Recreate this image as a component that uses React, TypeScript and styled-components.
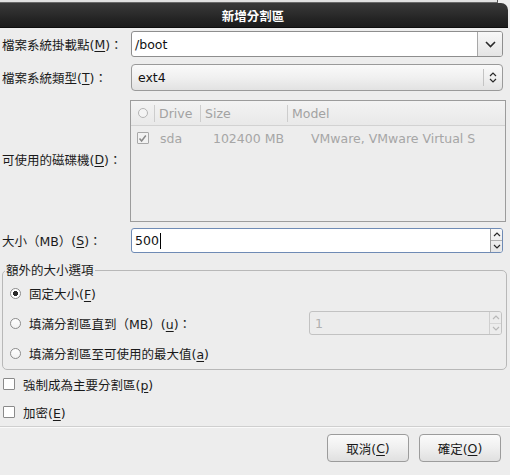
import React from "react";
import styled, { createGlobalStyle } from "styled-components";

const GlobalStyle = createGlobalStyle`
  html, body {
    margin: 0;
    padding: 0;
    background: #ededed;
  }
  body {
    font-family: "DejaVu Sans", "Noto Sans CJK TC", sans-serif;
    font-size: 12.5px;
    color: #1a1a1a;
  }
  u {
    text-underline-offset: 2px;
  }
`;

const ChevronDown = () => (
  <svg width="11" height="7" viewBox="0 0 11 7">
    <path d="M1 1 L5.5 5.5 L10 1" fill="none" stroke="#2a2a2a" strokeWidth="1.6" />
  </svg>
);

const UpDown = ({ color = "#2a2a2a" }: { color?: string }) => (
  <svg width="8" height="13" viewBox="0 0 8 13">
    <path d="M1 5 L4 2 L7 5" fill="none" stroke={color} strokeWidth="1.2" />
    <path d="M1 8 L4 11 L7 8" fill="none" stroke={color} strokeWidth="1.2" />
  </svg>
);

const ArrowUp = ({ color }: { color: string }) => (
  <svg width="8" height="5" viewBox="0 0 8 5">
    <path d="M1 4 L4 1 L7 4" fill="none" stroke={color} strokeWidth="1.2" />
  </svg>
);

const ArrowDown = ({ color }: { color: string }) => (
  <svg width="8" height="5" viewBox="0 0 8 5">
    <path d="M1 1 L4 4 L7 1" fill="none" stroke={color} strokeWidth="1.2" />
  </svg>
);

const Tick = ({ color }: { color: string }) => (
  <svg width="9" height="9" viewBox="0 0 9 9">
    <path d="M1.5 4.5 L3.6 7 L7.8 1.5" fill="none" stroke={color} strokeWidth="1.5" />
  </svg>
);

export default function App() {
  return (
    <>
      <GlobalStyle />
      <Screen>
        <TopStrip />
        <TitleBar>新增分割區</TitleBar>
        <Body>
          <FormGrid>
            <Label>
              檔案系統掛載點(<u>M</u>)：
            </Label>
            <ComboEntry>
              <EntryText>/boot</EntryText>
              <ArrowButton>
                <ChevronDown />
              </ArrowButton>
            </ComboEntry>

            <Label>
              檔案系統類型(<u>T</u>)：
            </Label>
            <ComboButton>
              <ComboText>ext4</ComboText>
              <ComboArrow>
                <UpDown />
              </ComboArrow>
            </ComboButton>

            <Label>
              可使用的磁碟機(<u>D</u>)：
            </Label>
            <Tree>
              <TreeHeader>
                <HeadCell $first>
                  <RadioMark $size={10} $dim />
                </HeadCell>
                <HeadCell>Drive</HeadCell>
                <HeadCell>Size</HeadCell>
                <HeadCell>Model</HeadCell>
              </TreeHeader>
              <TreeRow>
                <Cell $center>
                  <CheckBox $dim>
                    <Tick color="#8a8a8a" />
                  </CheckBox>
                </Cell>
                <Cell $pl={6}>sda</Cell>
                <Cell $right>102400 MB</Cell>
                <Cell $pl={24}>VMware, VMware Virtual S</Cell>
              </TreeRow>
            </Tree>

            <Label>
              大小（MB）(<u>S</u>)：
            </Label>
            <SpinEntry $focus>
              <EntryText>
                500<Caret />
              </EntryText>
              <SpinButtons>
                <SpinHalf>
                  <ArrowUp color="#2a2a2a" />
                </SpinHalf>
                <SpinHalf $bottom>
                  <ArrowDown color="#2a2a2a" />
                </SpinHalf>
              </SpinButtons>
            </SpinEntry>
          </FormGrid>

          <Frame>
            <Legend>額外的大小選項</Legend>
            <OptionRow>
              <RadioMark $size={11} $checked />
              <span>
                固定大小(<u>F</u>)
              </span>
            </OptionRow>
            <OptionRow>
              <RadioMark $size={11} />
              <span>
                填滿分割區直到（MB）(<u>u</u>)：
              </span>
              <SmallSpin>
                <DimText>1</DimText>
                <SpinButtons $dim>
                  <SpinHalf $dim>
                    <ArrowUp color="#b8b8b8" />
                  </SpinHalf>
                  <SpinHalf $bottom $dim>
                    <ArrowDown color="#b8b8b8" />
                  </SpinHalf>
                </SpinButtons>
              </SmallSpin>
            </OptionRow>
            <OptionRow>
              <RadioMark $size={11} />
              <span>
                填滿分割區至可使用的最大值(<u>a</u>)
              </span>
            </OptionRow>
          </Frame>

          <CheckRow>
            <CheckBox />
            <span>
              強制成為主要分割區(<u>p</u>)
            </span>
          </CheckRow>
          <CheckRow>
            <CheckBox />
            <span>
              加密(<u>E</u>)
            </span>
          </CheckRow>

          <Separator />

          <ButtonBar>
            <PushButton>
              取消(<u>C</u>)
            </PushButton>
            <PushButton>
              確定(<u>O</u>)
            </PushButton>
          </ButtonBar>
        </Body>
      </Screen>
    </>
  );
}

const Screen = styled.div`
  width: 510px;
  height: 475px;
  overflow: hidden;
  background: #ededed;
  display: flex;
  flex-direction: column;
`;

const TopStrip = styled.div`
  height: 3px;
  background: #e2e2e2;
  border-bottom: 1px solid #6a6a6a;
  box-sizing: border-box;
  width: 498px;
  border-right: 1px solid #555;
`;

const TitleBar = styled.div`
  height: 25px;
  margin-right: 2px;
  border-top-right-radius: 7px;
  background: linear-gradient(#3a3a3a, #232323 70%, #1c1c1c);
  border-bottom: 1px solid #0e0e0e;
  box-sizing: border-box;
  color: #ffffff;
  font-weight: bold;
  font-size: 12.5px;
  display: flex;
  align-items: center;
  justify-content: center;
  padding-right: 2px;
`;

const Body = styled.div`
  display: flex;
  flex-direction: column;
  padding-top: 3px;
`;

const FormGrid = styled.div`
  display: grid;
  grid-template-columns: 131px 1fr;
  grid-template-rows: 26px 27px 123px 25px;
  row-gap: 7px;
  padding-right: 7px;
`;

const Label = styled.div`
  display: flex;
  align-items: center;
  padding-left: 2px;
  white-space: nowrap;
`;

const ComboEntry = styled.div`
  display: flex;
  border: 1px solid #8e8e8e;
  border-radius: 3px;
  background: #ffffff;
  overflow: hidden;
`;

const EntryText = styled.div`
  flex: 1;
  display: flex;
  align-items: center;
  padding-left: 3px;
  color: #111;
`;

const ArrowButton = styled.div`
  width: 24px;
  display: flex;
  align-items: center;
  justify-content: center;
  border-left: 1px solid #a8a8a8;
  background: linear-gradient(#f8f8f8, #e4e4e4);
`;

const ComboButton = styled.div`
  display: flex;
  border: 1px solid #9a9a9a;
  border-radius: 4px;
  background: linear-gradient(#fafafa, #f0f0f0 50%, #e2e2e2);
`;

const ComboText = styled.div`
  flex: 1;
  display: flex;
  align-items: center;
  padding-left: 6px;
  color: #111;
`;

const ComboArrow = styled.div`
  width: 18px;
  margin: 4px 0;
  display: flex;
  align-items: center;
  justify-content: center;
  border-left: 1px solid #c4c4c4;
`;

const Tree = styled.div`
  margin: 2px -3px -1px -1px;
  border: 1px solid #9c9c9c;
  background: #ededed;
  display: flex;
  flex-direction: column;
`;

const TreeHeader = styled.div`
  height: 24px;
  display: grid;
  grid-template-columns: 23px 46px 87px 1fr;
  align-items: center;
  background: linear-gradient(#f3f3f3, #e9e9e9);
  border-bottom: 1px solid #d2d2d2;
  color: #a2a2a2;
`;

const HeadCell = styled.div<{ $first?: boolean }>`
  height: 17px;
  display: flex;
  align-items: center;
  justify-content: ${(p) => (p.$first ? "center" : "flex-start")};
  padding-left: ${(p) => (p.$first ? "0" : "4px")};
  border-left: ${(p) => (p.$first ? "none" : "1px solid #cdcdcd")};
`;

const TreeRow = styled.div`
  height: 24px;
  display: grid;
  grid-template-columns: 23px 46px 87px 1fr;
  align-items: center;
  color: #a6a6a6;
`;

const Cell = styled.div<{ $center?: boolean; $right?: boolean; $pl?: number }>`
  display: flex;
  align-items: center;
  white-space: nowrap;
  overflow: hidden;
  justify-content: ${(p) => (p.$center ? "center" : p.$right ? "flex-end" : "flex-start")};
  padding-left: ${(p) => p.$pl ?? 0}px;
  padding-right: ${(p) => (p.$right ? 3 : 0)}px;
`;

const RadioMark = styled.span<{ $size: number; $checked?: boolean; $dim?: boolean }>`
  width: ${(p) => p.$size}px;
  height: ${(p) => p.$size}px;
  flex: none;
  box-sizing: border-box;
  border-radius: 50%;
  border: 1px solid ${(p) => (p.$dim ? "#b4b4b4" : "#8c8c8c")};
  background: ${(p) =>
    p.$checked
      ? "radial-gradient(circle, #2a2a2a 0 2.4px, #ffffff 2.8px)"
      : p.$dim
        ? "#f4f4f4"
        : "linear-gradient(#ffffff, #f2f2f2)"};
`;

const CheckBox = styled.span<{ $dim?: boolean }>`
  width: 12px;
  height: 12px;
  flex: none;
  box-sizing: border-box;
  border: 1px solid ${(p) => (p.$dim ? "#a8a8a8" : "#8a8a8a")};
  border-radius: 1px;
  background: ${(p) => (p.$dim ? "#f2f2f2" : "#ffffff")};
  display: flex;
  align-items: center;
  justify-content: center;
`;

const SpinEntry = styled.div<{ $focus?: boolean }>`
  display: flex;
  border: 1px solid ${(p) => (p.$focus ? "#6f8bb5" : "#8e8e8e")};
  border-radius: 3px;
  background: #ffffff;
  overflow: hidden;
`;

const Caret = styled.span`
  display: inline-block;
  width: 1px;
  height: 16px;
  background: #000;
  margin-left: 1px;
`;

const SpinButtons = styled.div<{ $dim?: boolean }>`
  width: 11px;
  display: flex;
  flex-direction: column;
  border-left: 1px solid ${(p) => (p.$dim ? "#cfcfcf" : "#9a9a9a")};
  background: ${(p) => (p.$dim ? "#ececec" : "linear-gradient(#f8f8f8, #e6e6e6)")};
`;

const SpinHalf = styled.div<{ $bottom?: boolean; $dim?: boolean }>`
  flex: 1;
  display: flex;
  align-items: center;
  justify-content: center;
  border-top: ${(p) => (p.$bottom ? `1px solid ${p.$dim ? "#d6d6d6" : "#b0b0b0"}` : "none")};
`;

const Frame = styled.fieldset`
  margin: 10px 3px 0 2px;
  padding: 0 4px 1px 7px;
  border: 1px solid #b8b8b8;
  border-radius: 5px;
  min-width: 0;
`;

const Legend = styled.legend`
  padding: 0 1px;
  margin-left: -5px;
  line-height: 15px;
  color: #1a1a1a;
`;

const OptionRow = styled.div`
  height: 30px;
  display: flex;
  align-items: center;
  gap: 8px;
`;

const SmallSpin = styled.div`
  margin-left: auto;
  width: 193px;
  height: 24px;
  box-sizing: border-box;
  display: flex;
  border: 1px solid #c2c2c2;
  border-radius: 3px;
  background: #ececec;
  overflow: hidden;
`;

const DimText = styled.div`
  flex: 1;
  display: flex;
  align-items: center;
  padding-left: 5px;
  color: #b0b0b0;
`;

const CheckRow = styled.div`
  height: 28px;
  display: flex;
  align-items: center;
  gap: 8px;
  padding-left: 3px;
  &:first-of-type {
    margin-top: 0;
  }
`;

const Separator = styled.div`
  height: 1px;
  background: #cfcfcf;
  border-bottom: 1px solid #fafafa;
`;

const ButtonBar = styled.div`
  display: flex;
  justify-content: flex-end;
  gap: 10px;
  padding: 6px 9px 0 0;
`;

const PushButton = styled.div`
  width: 82px;
  height: 28px;
  box-sizing: border-box;
  display: flex;
  align-items: center;
  justify-content: center;
  border: 1px solid #9c9c9c;
  border-radius: 4px;
  background: linear-gradient(#fbfbfb, #efefef 50%, #e0e0e0);
  color: #1a1a1a;
`;
